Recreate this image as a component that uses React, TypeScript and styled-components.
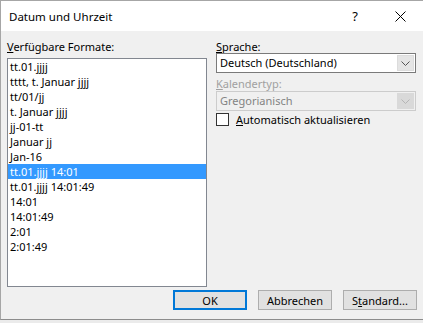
import React from "react";
import styled, { createGlobalStyle } from "styled-components";

const Global = createGlobalStyle`
  html, body { margin: 0; padding: 0; background: #ebebeb; }
  body { font-family: "Noto Sans", "Open Sans", sans-serif; font-size: 11px; color: #000; }
`;

const Window = styled.div`
  width: 422px;
  height: 318px;
  border-top: 1px solid #a6a6a6;
  border-left: 1px solid #a6a6a6;
  border-bottom: 1px solid #8c8c8c;
  background: #f0f0f0;
  display: flex;
  flex-direction: column;
  overflow: hidden;
`;

const TitleBar = styled.div`
  height: 30px;
  background: #fff;
  display: flex;
  align-items: center;
  padding-left: 8px;
  font-size: 11.5px;
  flex-shrink: 0;
`;

const Title = styled.div`
  flex: 1;
`;

const Help = styled.div`
  width: 30px;
  text-align: center;
  font-size: 13px;
  margin-right: 7px;
`;

const Close = styled.div`
  width: 46px;
  height: 30px;
  display: flex;
  align-items: center;
  justify-content: center;
`;

const Body = styled.div`
  flex: 1;
  display: flex;
  flex-direction: column;
  padding: 9px 6px 0 6px;
`;

const Columns = styled.div`
  display: flex;
  gap: 9px;
`;

const Column = styled.div`
  width: 200px;
  display: flex;
  flex-direction: column;
`;

const Label = styled.div<{ $h: number; $top?: number; $disabled?: boolean }>`
  height: ${(p) => p.$h}px;
  box-sizing: border-box;
  padding-top: ${(p) => p.$top ?? 0}px;
  line-height: 14px;
  color: ${(p) => (p.$disabled ? "#a0a0a0" : "#000")};
  white-space: nowrap;
`;

const U = styled.span`
  text-decoration: underline;
  text-underline-offset: 1px;
`;

const ListBox = styled.div`
  height: 227px;
  border: 1px solid #828790;
  background: #fff;
  display: flex;
  flex-direction: column;
`;

const Item = styled.div<{ $sel?: boolean }>`
  height: 15px;
  line-height: 15px;
  padding-left: 2px;
  white-space: nowrap;
  background: ${(p) => (p.$sel ? "#3399ff" : "transparent")};
  color: ${(p) => (p.$sel ? "#fff" : "#000")};
`;

const Select = styled.div<{ $disabled?: boolean }>`
  height: 18px;
  border: 1px solid ${(p) => (p.$disabled ? "#cccccc" : "#7a7a7a")};
  background: ${(p) => (p.$disabled ? "#f0f0f0" : "#fff")};
  display: flex;
  align-items: stretch;
`;

const SelectText = styled.div<{ $disabled?: boolean }>`
  flex: 1;
  line-height: 18px;
  padding-left: 3px;
  color: ${(p) => (p.$disabled ? "#838383" : "#000")};
`;

const DropBtn = styled.div<{ $disabled?: boolean }>`
  width: 17px;
  margin: 1px;
  background: ${(p) => (p.$disabled ? "#d9d9d9" : "#e5e5e5")};
  border: 1px solid ${(p) => (p.$disabled ? "#d9d9d9" : "#dcdcdc")};
  box-sizing: border-box;
  display: flex;
  align-items: center;
  justify-content: center;
`;

const CheckRow = styled.div`
  margin-top: 2px;
  display: flex;
  align-items: center;
  gap: 7px;
  height: 13px;
`;

const CheckBox = styled.div`
  width: 11px;
  height: 11px;
  border: 1px solid #333;
  background: #fff;
`;

const ButtonRow = styled.div`
  margin-top: 3px;
  display: flex;
  justify-content: flex-end;
  gap: 11px;
`;

const Button = styled.div<{ $default?: boolean }>`
  width: 74px;
  height: 20px;
  box-sizing: border-box;
  border: ${(p) => (p.$default ? "2px solid #0078d7" : "1px solid #adadad")};
  background: #e1e1e1;
  display: flex;
  align-items: center;
  justify-content: center;
`;

const Chevron = ({ color }: { color: string }) => (
  <svg width="9" height="5" viewBox="0 0 9 5">
    <path d="M0.5 0.5 L4.5 4.5 L8.5 0.5" fill="none" stroke={color} strokeWidth="1" />
  </svg>
);

const items = [
  "tt.01.jjjj",
  "tttt, t. Januar jjjj",
  "tt/01/jj",
  "t. Januar jjjj",
  "jj-01-tt",
  "Januar jj",
  "Jan-16",
  "tt.01.jjjj 14:01",
  "tt.01.jjjj 14:01:49",
  "14:01",
  "14:01:49",
  "2:01",
  "2:01:49",
];

export default function App() {
  return (
    <>
      <Global />
      <Window>
        <TitleBar>
          <Title>Datum und Uhrzeit</Title>
          <Help>?</Help>
          <Close>
            <svg width="11" height="11" viewBox="0 0 11 11">
              <path d="M0.5 0.5 L10.5 10.5 M10.5 0.5 L0.5 10.5" stroke="#000" strokeWidth="1" />
            </svg>
          </Close>
        </TitleBar>
        <Body>
          <Columns>
            <Column>
              <Label $h={18}>
                <U>V</U>erfügbare Formate:
              </Label>
              <ListBox>
                {items.map((t, i) => (
                  <Item key={t} $sel={i === 7}>
                    {t}
                  </Item>
                ))}
              </ListBox>
            </Column>
            <Column>
              <Label $h={13}>
                <U>S</U>prache:
              </Label>
              <Select>
                <SelectText>Deutsch (Deutschland)</SelectText>
                <DropBtn>
                  <Chevron color="#555" />
                </DropBtn>
              </Select>
              <Label $h={18} $top={4} $disabled>
                <U>K</U>alendertyp:
              </Label>
              <Select $disabled>
                <SelectText $disabled>Gregorianisch</SelectText>
                <DropBtn $disabled>
                  <Chevron color="#b5b5b5" />
                </DropBtn>
              </Select>
              <CheckRow>
                <CheckBox />
                <span>
                  <U>A</U>utomatisch aktualisieren
                </span>
              </CheckRow>
            </Column>
          </Columns>
          <ButtonRow>
            <Button $default>OK</Button>
            <Button>Abbrechen</Button>
            <Button>
              S<U>t</U>andard...
            </Button>
          </ButtonRow>
        </Body>
      </Window>
    </>
  );
}
